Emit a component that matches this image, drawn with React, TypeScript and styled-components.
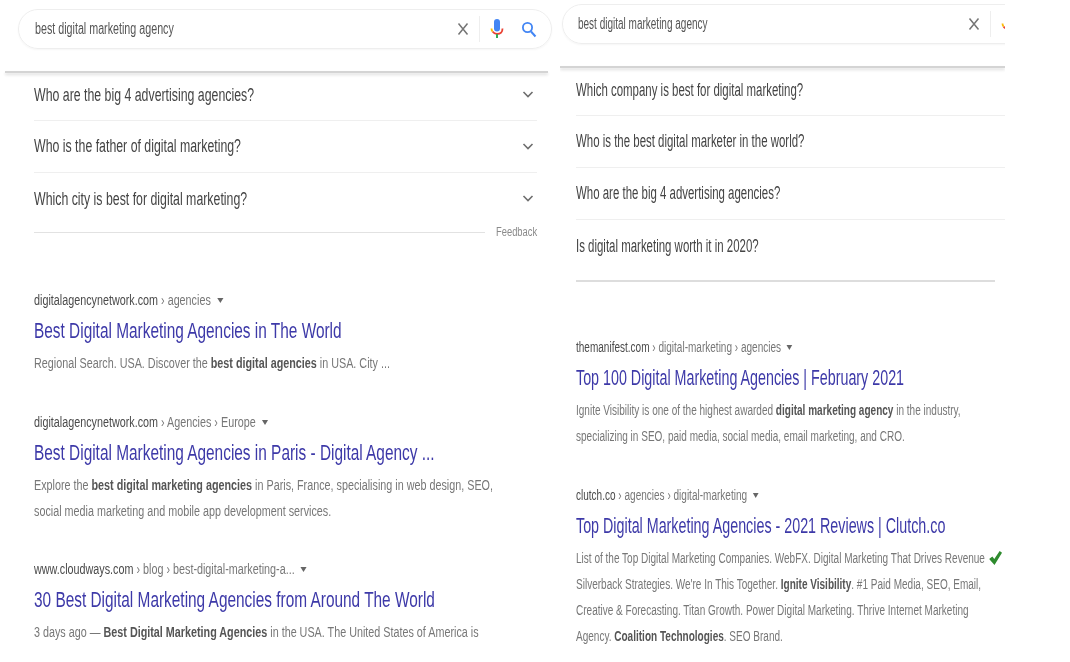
import { FC, ReactNode } from "react";
import styled, { createGlobalStyle, css } from "styled-components";

const GlobalStyle = createGlobalStyle`
    html, body {
        margin: 0;
        padding: 0;
        background: #fff;
        font-family: "Liberation Sans", Arial, sans-serif;
    }
`

// the screenshot is squeezed horizontally, and each half by its own amount,
// so text runs read their narrowing from vars set on the Column
const squeezed = (name: string) => css`
    display: inline-block;
    white-space: nowrap;
    transform: scaleX(var(--${name}));
    transform-origin: left center;
`

const Page = styled.div`
    width: 1070px;
    height: 662px;
    display: flex;
    overflow: hidden;
    filter: blur(0.6px);
`

const Column = styled.div<{ $width: number; $top: number; $left: number; $narrow?: boolean }>`
    width: ${({ $width }) => $width}px;
    margin-left: ${({ $left }) => $left}px;
    padding-top: ${({ $top }) => $top}px;
    flex-shrink: 0;
    overflow: hidden;
    box-sizing: border-box;
    --query: ${({ $narrow }) => ($narrow ? 0.625 : 0.67)};
    --question: ${({ $narrow }) => ($narrow ? 0.636 : 0.685)};
    --url: ${({ $narrow }) => ($narrow ? 0.716 : 0.77)};
    --title: ${({ $narrow }) => ($narrow ? 0.65 : 0.7)};
    --snippet: ${({ $narrow }) => ($narrow ? 0.716 : 0.77)};
`

const SearchBox = styled.div<{ $width: number; $left: number; $pad: number }>`
    width: ${({ $width }) => $width}px;
    height: 40px;
    margin-left: ${({ $left }) => $left}px;
    padding: 0 7px 0 ${({ $pad }) => $pad}px;
    box-sizing: border-box;
    border: 1px solid #eeeeee;
    border-radius: 20px;
    box-shadow: 0 1px 2px rgba(0, 0, 0, 0.04);
    display: flex;
    align-items: center;
`

const Query = styled.span`
    ${squeezed("query")}
    flex: 1;
    font-size: 16px;
    color: #555;
`

const IconSlot = styled.span<{ $width: number }>`
    width: ${({ $width }) => $width}px;
    display: flex;
    justify-content: center;
    flex-shrink: 0;
`

const SearchDivider = styled.span`
    width: 1px;
    height: 26px;
    background: #eeeeee;
    flex-shrink: 0;
`

const HeaderShade = styled.div<{ $left: number; $width: number }>`
    width: ${({ $width }) => $width}px;
    height: 2px;
    margin: 22px 0 0 ${({ $left }) => $left}px;
    background: #d4d4d4;
    box-shadow: 0 2px 3px rgba(0, 0, 0, 0.14);
`

const Questions = styled.div<{ $left: number; $width: number }>`
    width: ${({ $width }) => $width}px;
    margin-left: ${({ $left }) => $left}px;
`

const QuestionRow = styled.div`
    height: 52px;
    box-sizing: border-box;
    display: flex;
    align-items: center;
    justify-content: space-between;
    border-bottom: 1px solid #efefef;

    &:first-child {
        height: 48px;
        padding-bottom: 3px;
    }

    &:last-child {
        border-bottom: none;
    }
`

const QuestionText = styled.span`
    ${squeezed("question")}
    font-size: 18px;
    color: #444;
`

const FeedbackRow = styled.div`
    height: 14px;
    display: flex;
    align-items: center;
`

const FeedbackRule = styled.div`
    flex: 1;
    height: 1px;
    background: #e2e2e2;
`

const FeedbackLabel = styled.span`
    --feedback: 0.78;
    ${squeezed("feedback")}
    width: 41px;
    margin-left: 11px;
    font-size: 12px;
    color: #8a8a8a;
`

const EndRule = styled.div`
    width: 419px;
    height: 2px;
    margin-top: 8px;
    background: #dddddd;
`

const Results = styled.div<{ $left: number; $top: number; $gap: number }>`
    margin: ${({ $top }) => $top}px 0 0 ${({ $left }) => $left}px;
    display: flex;
    flex-direction: column;
    gap: ${({ $gap }) => $gap}px;
`

const Result = styled.div``

const UrlLine = styled.div`
    height: 18px;
    display: flex;
    align-items: center;
`

const Url = styled.span`
    ${squeezed("url")}
    font-size: 14px;
    color: #4a4a4a;
`

const Crumbs = styled.span`
    color: #777;
`

const Caret = styled.i`
    display: inline-block;
    width: 0;
    height: 0;
    margin: 0 0 1px 8px;
    border-left: 4px solid transparent;
    border-right: 4px solid transparent;
    border-top: 5px solid #666;
    vertical-align: middle;
`

const Title = styled.div`
    height: 32px;
    margin: 6px 0 3px;
    line-height: 32px;
`

const TitleText = styled.span`
    ${squeezed("title")}
    font-size: 22px;
    color: #3d39a8;
`

const SnippetLine = styled.div`
    height: 26px;
    line-height: 26px;
`

const SnippetText = styled.span`
    ${squeezed("snippet")}
    font-size: 14px;
    color: #777;

    b {
        color: #555;
    }

    svg {
        margin-left: 6px;
        vertical-align: -2px;
    }
`

const CloseIcon: FC = () => (
    <svg width="14" height="14" viewBox="0 0 14 14">
        <path d="M2.5 1.5 L11.5 12.5 M11.5 1.5 L2.5 12.5" stroke="#757575" strokeWidth="1.5" fill="none" />
    </svg>
)

const MicIcon: FC = () => (
    <svg width="14" height="22" viewBox="0 0 14 22">
        <rect x="4" y="1" width="6" height="12.5" rx="3" fill="#4285f4" />
        <path d="M2.5 13.5 C4 15.5 5.5 16 7 16 C10 16 12.5 14.5 12.5 10.5" stroke="#ea4335" strokeWidth="1.8" fill="none" />
        <path d="M1.5 10.5 C1.5 11.8 1.9 12.8 2.5 13.5" stroke="#fbbc05" strokeWidth="1.8" fill="none" />
        <rect x="6" y="16" width="2" height="4" fill="#34a853" />
    </svg>
)

const SearchIcon: FC = () => (
    <svg width="16" height="17" viewBox="0 0 16 17">
        <circle cx="6.5" cy="6.5" r="4.6" stroke="#4285f4" strokeWidth="1.8" fill="none" />
        <path d="M10 10.5 L14.5 15.5" stroke="#4285f4" strokeWidth="2" fill="none" />
    </svg>
)

const ChevronIcon: FC = () => (
    <svg width="12" height="8" viewBox="0 0 12 8">
        <path d="M1.5 1 L6 5.5 L10.5 1" stroke="#6e6e6e" strokeWidth="1.6" fill="none" />
    </svg>
)

const CheckIcon: FC = () => (
    <svg width="18" height="14" viewBox="0 0 12 13" preserveAspectRatio="none">
        <path d="M0 7.5 L3 5 L4.8 7.5 L9.8 0 L12 1.6 L5 13 Z" fill="#2e8b2e" />
    </svg>
)

const SearchControls: FC = () => (
    <>
        <IconSlot $width={16}><CloseIcon /></IconSlot>
        <IconSlot $width={8} />
        <SearchDivider />
        <IconSlot $width={34}><MicIcon /></IconSlot>
        <IconSlot $width={30}><SearchIcon /></IconSlot>
    </>
)

const Question: FC<{ text: string; open?: boolean }> = ({ text, open }) => (
    <QuestionRow>
        <QuestionText>{text}</QuestionText>
        {open && <IconSlot $width={18}><ChevronIcon /></IconSlot>}
    </QuestionRow>
)

const ResultBlock: FC<{ site: string; crumbs: string; title: string; lines: ReactNode[] }> = ({ site, crumbs, title, lines }) => (
    <Result>
        <UrlLine>
            <Url>{site}<Crumbs> › {crumbs}</Crumbs><Caret /></Url>
        </UrlLine>
        <Title><TitleText>{title}</TitleText></Title>
        {lines.map((line, i) => (
            <SnippetLine key={i}><SnippetText>{line}</SnippetText></SnippetLine>
        ))}
    </Result>
)

const App: FC = () => {
    return (
        <>
            <GlobalStyle />
            <Page>
                <Column $width={556} $top={9} $left={0}>
                    <SearchBox $width={534} $left={18} $pad={16}>
                        <Query>best digital marketing agency</Query>
                        <SearchControls />
                    </SearchBox>
                    <HeaderShade $left={5} $width={543} />
                    <Questions $left={34} $width={503}>
                        <Question open text="Who are the big 4 advertising agencies?" />
                        <Question open text="Who is the father of digital marketing?" />
                        <Question open text="Which city is best for digital marketing?" />
                    </Questions>
                    <Questions $left={34} $width={503}>
                        <FeedbackRow>
                            <FeedbackRule />
                            <FeedbackLabel>Feedback</FeedbackLabel>
                        </FeedbackRow>
                    </Questions>
                    <Results $left={34} $top={52} $gap={36.5}>
                        <ResultBlock
                            site="digitalagencynetwork.com"
                            crumbs="agencies"
                            title="Best Digital Marketing Agencies in The World"
                            lines={[<>Regional Search. USA. Discover the <b>best digital agencies</b> in USA. City ...</>]}
                        />
                        <ResultBlock
                            site="digitalagencynetwork.com"
                            crumbs="Agencies › Europe"
                            title="Best Digital Marketing Agencies in Paris - Digital Agency ..."
                            lines={[
                                <>Explore the <b>best digital marketing agencies</b> in Paris, France, specialising in web design, SEO,</>,
                                <>social media marketing and mobile app development services.</>,
                            ]}
                        />
                        <ResultBlock
                            site="www.cloudways.com"
                            crumbs="blog › best-digital-marketing-a..."
                            title="30 Best Digital Marketing Agencies from Around The World"
                            lines={[<>3 days ago — <b>Best Digital Marketing Agencies</b> in the USA. The United States of America is</>]}
                        />
                    </Results>
                </Column>
                <Column $width={445} $top={4} $left={4} $narrow>
                    <SearchBox $width={501} $left={2} $pad={15}>
                        <Query>best digital marketing agency</Query>
                        <SearchControls />
                    </SearchBox>
                    <HeaderShade $left={0} $width={445} />
                    <Questions $left={16} $width={429}>
                        <Question text="Which company is best for digital marketing?" />
                        <Question text="Who is the best digital marketer in the world?" />
                        <Question text="Who are the big 4 advertising agencies?" />
                        <Question text="Is digital marketing worth it in 2020?" />
                    </Questions>
                    <Questions $left={16} $width={429}>
                        <EndRule />
                    </Questions>
                    <Results $left={16} $top={56} $gap={37}>
                        <ResultBlock
                            site="themanifest.com"
                            crumbs="digital-marketing › agencies"
                            title="Top 100 Digital Marketing Agencies | February 2021"
                            lines={[
                                <>Ignite Visibility is one of the highest awarded <b>digital marketing agency</b> in the industry,</>,
                                <>specializing in SEO, paid media, social media, email marketing, and CRO.</>,
                            ]}
                        />
                        <ResultBlock
                            site="clutch.co"
                            crumbs="agencies › digital-marketing"
                            title="Top Digital Marketing Agencies - 2021 Reviews | Clutch.co"
                            lines={[
                                <>List of the Top Digital Marketing Companies. WebFX. Digital Marketing That Drives Revenue<CheckIcon /></>,
                                <>Silverback Strategies. We're In This Together. <b>Ignite Visibility</b>. #1 Paid Media, SEO, Email,</>,
                                <>Creative &amp; Forecasting. Titan Growth. Power Digital Marketing. Thrive Internet Marketing</>,
                                <>Agency. <b>Coalition Technologies</b>. SEO Brand.</>,
                            ]}
                        />
                    </Results>
                </Column>
            </Page>
        </>
    )
}

export default App
